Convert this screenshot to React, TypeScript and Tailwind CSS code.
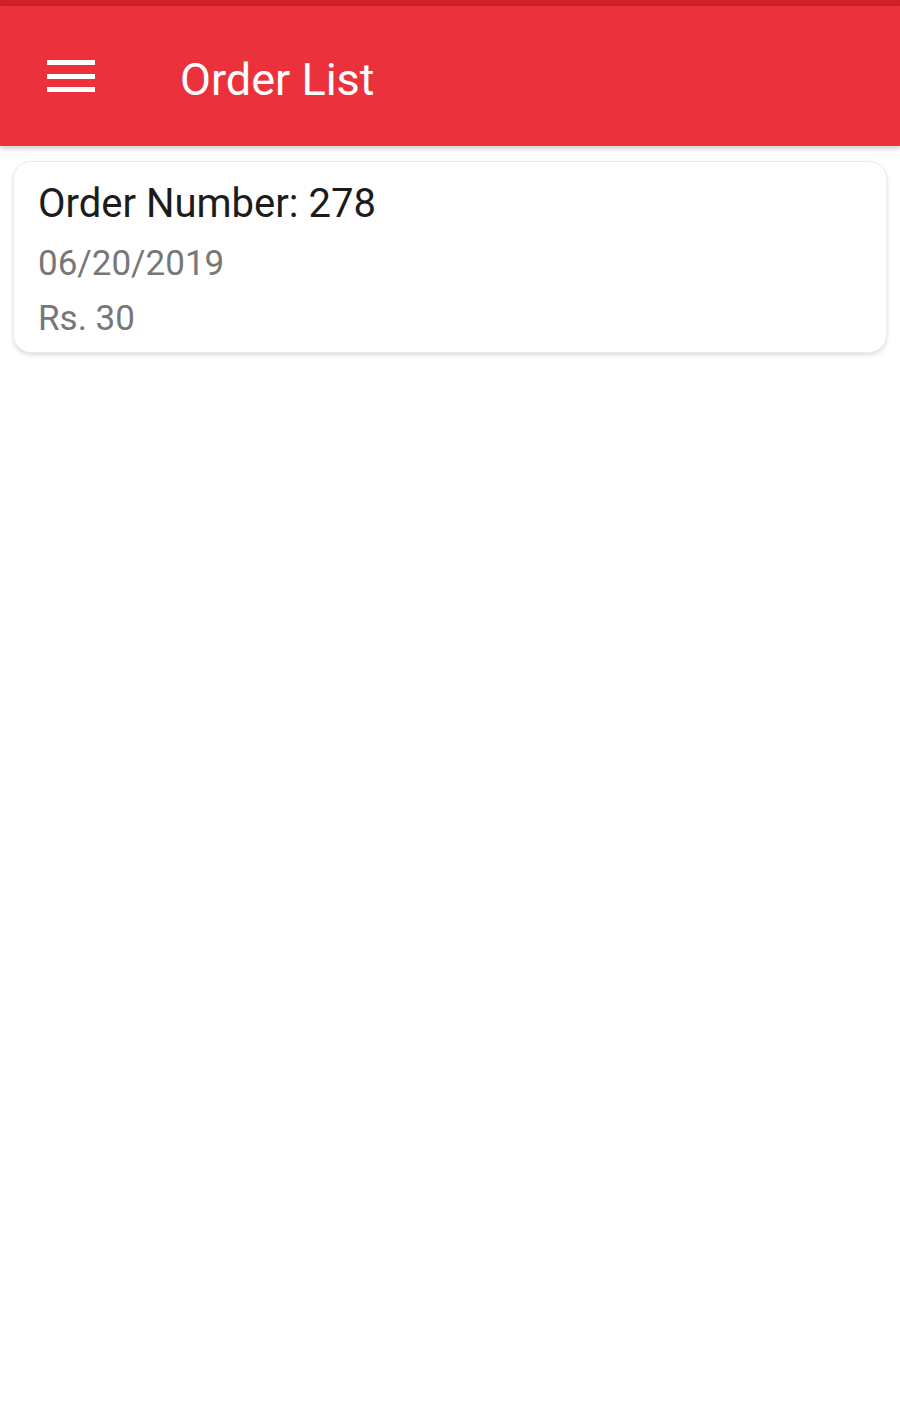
export default function App() {
  return (
    <div className="min-h-[1422px] bg-white" style={{ fontFamily: "Roboto, 'Noto Sans', sans-serif" }}>
      <div className="h-[6px] bg-[#cf2128]" />
      <header className="h-[140px] bg-[#eb323c] flex items-center shadow-[0_3px_5px_rgba(0,0,0,0.18)] relative">
        <button className="ml-[47px] flex flex-col gap-[8.5px] w-[48px]">
          <span className="block h-[5px] bg-white" />
          <span className="block h-[5px] bg-white" />
          <span className="block h-[5px] bg-white" />
        </button>
        <h1 className="ml-[85px] text-[45px] leading-none text-white pt-[6px]">Order List</h1>
      </header>
      <div className="px-[13px] pt-[15px]">
        <div className="rounded-[18px] border border-[#ececec] shadow-[0_2px_4px_rgba(0,0,0,0.14)] bg-white pl-[24px] pr-[25px] pt-[20px] pb-[6px]">
          <p className="text-[40px] leading-[44px] text-[#1c1c1c]">Order Number: 278</p>
          <p className="text-[35px] leading-[56px] text-[#777777] mt-[10px]">06/20/2019</p>
          <p className="text-[35px] leading-[54px] text-[#777777]">Rs. 30</p>
        </div>
      </div>
    </div>
  );
}
